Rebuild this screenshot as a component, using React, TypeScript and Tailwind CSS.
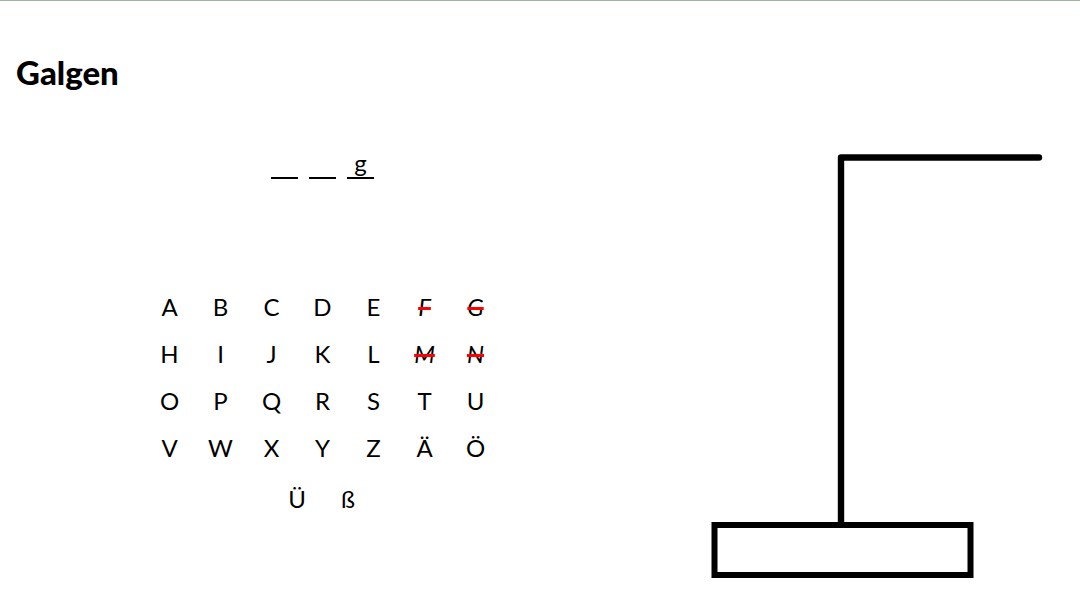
import { useState } from 'react';

const ROWS = ['ABCDEFG', 'HIJKLMN', 'OPQRSTU', 'VWXYZÄÖ'];
const LAST_ROW = 'Üß';
const INITIAL_WORD = ['', '', 'g'];

function LetterButton({ letter, used, onPick }: { letter: string; used: boolean; onPick: (l: string) => void }) {
  return (
    <button
      type="button"
      disabled={used}
      onClick={() => onPick(letter)}
      className={
        used
          ? 'h-[47px] w-[51px] text-center italic line-through decoration-[#ff0000] decoration-[3px]'
          : 'h-[47px] w-[51px] cursor-pointer text-center'
      }
    >
      {letter}
    </button>
  );
}

function Gallows() {
  return (
    <svg viewBox="0 0 332 426" className="h-auto w-[332px] max-w-full" fill="none" stroke="#000" role="img" aria-label="Galgen">
      <rect x="3.5" y="373" width="256" height="50" strokeWidth="6" />
      <path d="M130 371V5.5H328" strokeWidth="6.4" strokeLinecap="round" strokeLinejoin="round" />
    </svg>
  );
}

export default function App() {
  const [used, setUsed] = useState<string[]>(['F', 'G', 'M', 'N']);
  const pick = (letter: string) => setUsed((list) => [...list, letter]);

  return (
    <div className="border-t border-[#9fb59f] bg-white font-['Lato','Liberation_Sans',sans-serif] text-black">
      <h1 className="px-4 pt-[51px] text-[33px] leading-10 font-black">Galgen</h1>
      <main className="grid grid-cols-[645fr_435fr] pt-[60px]">
        <section className="flex flex-col items-center">
          <div className="flex gap-[11px] text-2xl leading-[22px]">
            {INITIAL_WORD.map((letter, i) => (
              <span key={i} className="h-[27px] w-[27px] border-b-2 border-black text-center">
                {letter}
              </span>
            ))}
          </div>
          <div className="pt-[104px] text-2xl">
            {ROWS.map((row) => (
              <div key={row} className="flex justify-center">
                {[...row].map((letter) => (
                  <LetterButton key={letter} letter={letter} used={used.includes(letter)} onPick={pick} />
                ))}
              </div>
            ))}
            <div className="flex justify-center pt-1">
              {[...LAST_ROW].map((letter) => (
                <LetterButton key={letter} letter={letter} used={used.includes(letter)} onPick={pick} />
              ))}
            </div>
          </div>
        </section>
        <section className="pl-[66px]">
          <Gallows />
        </section>
      </main>
    </div>
  );
}
